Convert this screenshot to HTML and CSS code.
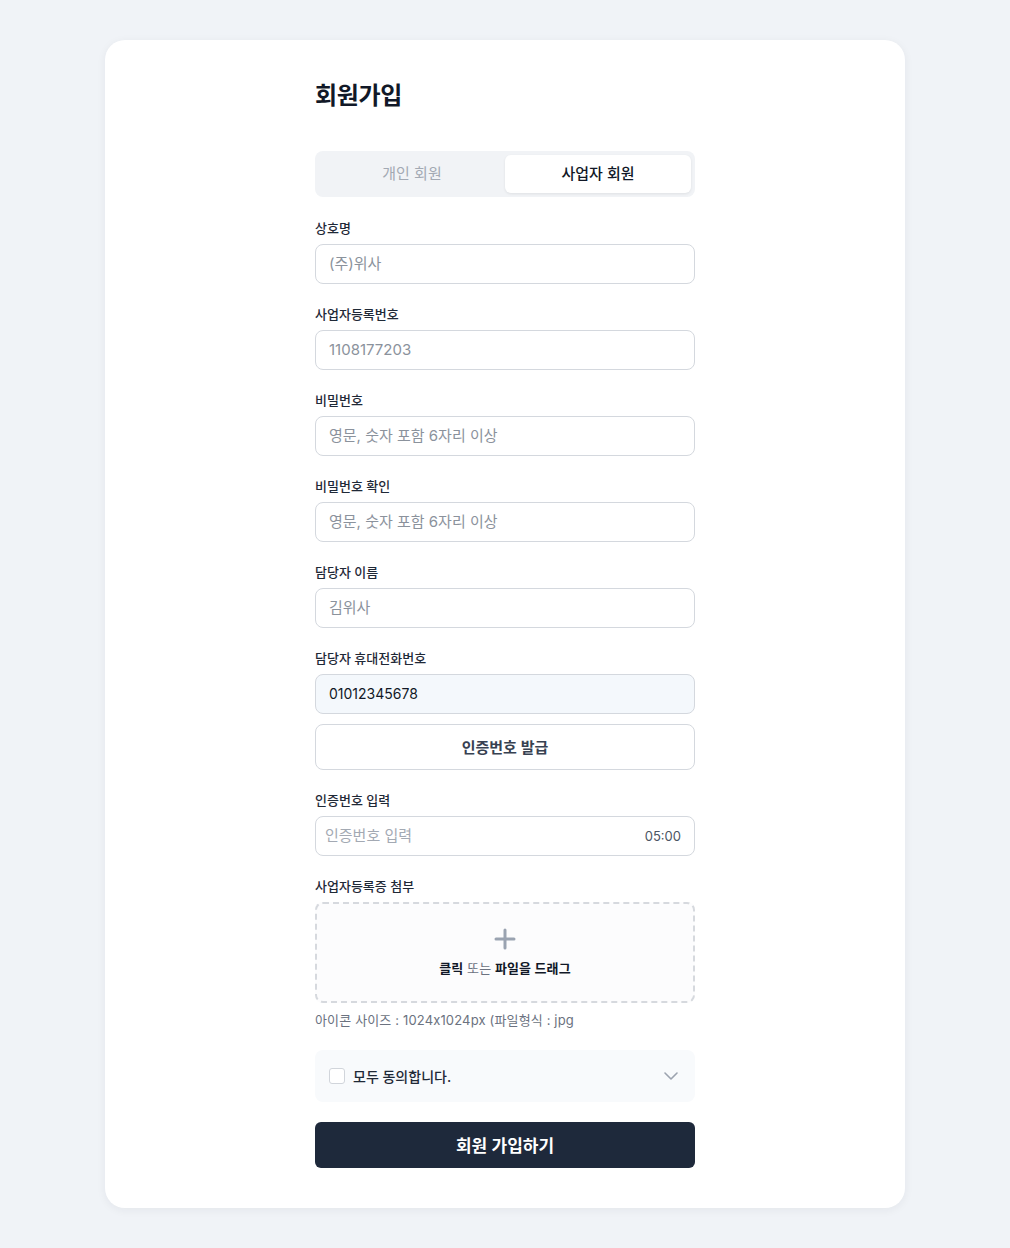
FILE: index.html
```html
<!DOCTYPE html>
<html lang="ko">
<head>
<meta charset="utf-8">
<title>회원가입</title>
<link rel="stylesheet" href="styles.css">
</head>
<body>
<div class="page">
  <div class="card">
    <form class="form">
      <h1 class="title">회원가입</h1>
      <div class="tabs">
        <button type="button" class="tab">개인 회원</button>
        <button type="button" class="tab active">사업자 회원</button>
      </div>

      <div class="field">
        <label class="label">상호명</label>
        <input class="input" placeholder="(주)위사">
      </div>
      <div class="field">
        <label class="label">사업자등록번호</label>
        <input class="input" placeholder="1108177203">
      </div>
      <div class="field">
        <label class="label">비밀번호</label>
        <input class="input" type="password" placeholder="영문, 숫자 포함 6자리 이상">
      </div>
      <div class="field">
        <label class="label">비밀번호 확인</label>
        <input class="input" type="password" placeholder="영문, 숫자 포함 6자리 이상">
      </div>
      <div class="field">
        <label class="label">담당자 이름</label>
        <input class="input" placeholder="김위사">
      </div>
      <div class="field">
        <label class="label">담당자 휴대전화번호</label>
        <input class="input filled" value="01012345678">
        <button type="button" class="outline-btn">인증번호 발급</button>
      </div>
      <div class="field">
        <label class="label">인증번호 입력</label>
        <div class="code-wrap">
          <input class="code-input" placeholder="인증번호 입력">
          <span class="timer">05:00</span>
        </div>
      </div>
      <div class="field upload-field">
        <label class="label">사업자등록증 첨부</label>
        <div class="upload">
          <svg class="plus" width="22" height="22" viewBox="0 0 22 22"><path d="M11 2v18M2 11h18" stroke="#9aa3b1" stroke-width="3" stroke-linecap="round"/></svg>
          <p class="upload-text"><b>클릭</b> 또는 <b>파일을 드래그</b></p>
        </div>
        <p class="hint">아이콘 사이즈 : 1024x1024px (파일형식 : jpg</p>
      </div>

      <div class="agree">
        <span class="check"></span>
        <span class="agree-text">모두 동의합니다.</span>
        <svg class="chev" width="14" height="8" viewBox="0 0 14 8"><path d="M1 1l6 6 6-6" fill="none" stroke="#9ca3af" stroke-width="1.6" stroke-linecap="round" stroke-linejoin="round"/></svg>
      </div>

      <button type="button" class="submit">회원 가입하기</button>
    </form>
  </div>
</div>
</body>
</html>
```

FILE: styles.css
```css
* { box-sizing: border-box; }
html, body {
  margin: 0;
  padding: 0;
  background: #f0f3f7;
  font-family: "Inter", "Noto Sans CJK KR", sans-serif;
  color: #1f2937;
}
.page {
  padding: 40px 105px 40px;
}
.card {
  width: 800px;
  background: #fff;
  border-radius: 20px;
  box-shadow: 0 2px 10px rgba(30, 41, 59, 0.06);
  padding: 40px 0 40px;
  display: flex;
  justify-content: center;
}
.form {
  width: 380px;
  display: flex;
  flex-direction: column;
}
.title {
  margin: 0 0 39px;
  font-size: 24px;
  line-height: 32px;
  font-weight: 700;
  color: #111827;
  letter-spacing: -0.3px;
}
.tabs {
  display: grid;
  grid-template-columns: 1fr 1fr;
  background: #f1f3f6;
  border-radius: 8px;
  padding: 4px;
  height: 46px;
  margin-bottom: 21px;
}
.tab {
  border: 0;
  background: transparent;
  font-family: inherit;
  font-size: 15px;
  line-height: 38px;
  padding: 0;
  color: #a3a9b3;
  border-radius: 6px;
  cursor: pointer;
}
.tab.active {
  background: #fff;
  color: #111827;
  font-weight: 500;
  box-shadow: 0 1px 3px rgba(0, 0, 0, 0.08);
}
.field {
  display: flex;
  flex-direction: column;
  margin-bottom: 20px;
}
.label {
  font-size: 13px;
  line-height: 20px;
  font-weight: 500;
  color: #1f2937;
  margin-bottom: 6px;
}
.input {
  height: 40px;
  border: 1px solid #d4d8de;
  border-radius: 8px;
  padding: 0 13px 1px;
  font-family: inherit;
  font-size: 15px;
  color: #111827;
  background: #fff;
  outline: none;
}
.input::placeholder { color: #8b929c; }
.input.filled {
  background: #f4f8fc;
  font-size: 14px;
  color: #111827;
}
.outline-btn {
  margin-top: 10px;
  height: 46px;
  border: 1px solid #d4d8de;
  border-radius: 8px;
  background: #fff;
  font-family: inherit;
  font-size: 15px;
  font-weight: 600;
  color: #374151;
  padding-bottom: 2px;
}
.code-wrap {
  height: 40px;
  border: 1px solid #d4d8de;
  border-radius: 8px;
  display: flex;
  align-items: center;
  padding: 0 13px 1px 9px;
}
.code-input {
  flex: 1;
  border: 0;
  outline: none;
  font-family: inherit;
  font-size: 15px;
  padding: 0;
  background: transparent;
}
.code-input::placeholder { color: #a3a9b3; }
.timer {
  font-size: 13px;
  color: #4b5563;
}
.upload {
  height: 101px;
  border: 2px dashed #d6d9de;
  border-radius: 8px;
  background: #fcfcfd;
  display: flex;
  flex-direction: column;
  align-items: center;
  justify-content: center;
}
.plus { display: block; }
.upload-text {
  margin: 9px 0 0;
  font-size: 13px;
  line-height: 18px;
  color: #6b7280;
  letter-spacing: 0.1px;
}
.upload-text b {
  font-weight: 600;
  color: #111827;
}
.hint {
  margin: 8px 0 0;
  font-size: 13px;
  line-height: 18px;
  color: #6b7280;
  letter-spacing: 0.15px;
}
.upload-field { margin-bottom: 21px; }
.agree {
  height: 52px;
  background: #f8fafc;
  border-radius: 8px;
  display: flex;
  align-items: center;
  padding: 0 17px 0 14px;
  margin-bottom: 20px;
}
.check {
  width: 16px;
  height: 16px;
  border: 1px solid #d1d5db;
  border-radius: 3px;
  background: #fff;
  margin-right: 8px;
}
.agree-text {
  flex: 1;
  font-size: 14px;
  font-weight: 500;
  color: #1f2937;
}
.submit {
  height: 46px;
  border: 0;
  border-radius: 6px;
  background: #1e293b;
  color: #fff;
  font-family: inherit;
  font-size: 17px;
  font-weight: 600;
  padding-bottom: 2px;
}
```
